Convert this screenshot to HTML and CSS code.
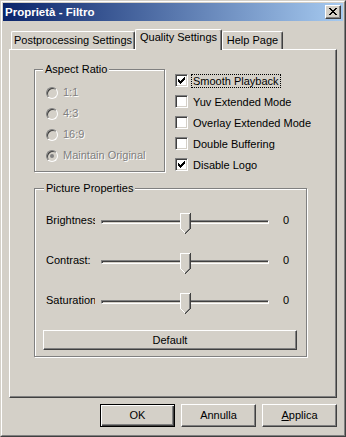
FILE: index.html
```html
<!DOCTYPE html>
<html>
<head>
<meta charset="utf-8">
<title>Proprietà - Filtro</title>
<link rel="stylesheet" href="styles.css">
</head>
<body>
<div class="window">
  <div class="frame">
    <div class="titlebar">
      <span class="title">Proprietà - Filtro</span>
      <span class="close">
        <svg class="close-x" width="8" height="7" viewBox="0 0 8 7" shape-rendering="crispEdges" fill="#000">
          <rect x="0" y="0" width="2" height="1"/><rect x="6" y="0" width="2" height="1"/>
          <rect x="1" y="1" width="2" height="1"/><rect x="5" y="1" width="2" height="1"/>
          <rect x="2" y="2" width="4" height="1"/>
          <rect x="3" y="3" width="2" height="1"/>
          <rect x="2" y="4" width="4" height="1"/>
          <rect x="1" y="5" width="2" height="1"/><rect x="5" y="5" width="2" height="1"/>
          <rect x="0" y="6" width="2" height="1"/><rect x="6" y="6" width="2" height="1"/>
        </svg>
      </span>
    </div>
    <div class="client">
      <div class="tabs">
        <div class="tab tab-post">Postprocessing Settings</div>
        <div class="tab tab-quality active">Quality Settings</div>
        <div class="tab tab-help">Help Page</div>
      </div>
      <div class="panel">
        <div class="top-row">
          <div class="group aspect">
            <div class="legend">Aspect Ratio</div>
            <div class="radios">
              <div class="radio-row"><span class="radio"></span><span class="dis">1:1</span></div>
              <div class="radio-row"><span class="radio"></span><span class="dis">4:3</span></div>
              <div class="radio-row"><span class="radio"></span><span class="dis">16:9</span></div>
              <div class="radio-row"><span class="radio selected"></span><span class="dis">Maintain Original</span></div>
            </div>
          </div>
          <div class="checks">
            <div class="check-row"><span class="box"><svg class="tick" width="7" height="7" viewBox="0 0 7 7" shape-rendering="crispEdges" fill="#000"><rect x="0" y="2" width="1" height="3"/><rect x="1" y="3" width="1" height="3"/><rect x="2" y="4" width="1" height="3"/><rect x="3" y="3" width="1" height="3"/><rect x="4" y="2" width="1" height="3"/><rect x="5" y="1" width="1" height="3"/><rect x="6" y="0" width="1" height="3"/></svg></span><span class="clabel focus">Smooth Playback</span></div>
            <div class="check-row"><span class="box"></span><span class="clabel">Yuv Extended Mode</span></div>
            <div class="check-row"><span class="box"></span><span class="clabel">Overlay Extended Mode</span></div>
            <div class="check-row"><span class="box"></span><span class="clabel">Double Buffering</span></div>
            <div class="check-row"><span class="box"><svg class="tick" width="7" height="7" viewBox="0 0 7 7" shape-rendering="crispEdges" fill="#000"><rect x="0" y="2" width="1" height="3"/><rect x="1" y="3" width="1" height="3"/><rect x="2" y="4" width="1" height="3"/><rect x="3" y="3" width="1" height="3"/><rect x="4" y="2" width="1" height="3"/><rect x="5" y="1" width="1" height="3"/><rect x="6" y="0" width="1" height="3"/></svg></span><span class="clabel">Disable Logo</span></div>
          </div>
        </div>
        <div class="group picture">
          <div class="legend">Picture Properties</div>
          <div class="slider-row">
            <span class="slabel">Brightness</span>
            <div class="slider">
              <div class="track"></div>
              <svg class="thumb" width="11" height="21" viewBox="0 0 11 21" shape-rendering="crispEdges">
                <polygon points="0,0 11,0 11,16 5.5,21.5 0,16" fill="#d4d0c8"/>
                <rect x="0" y="0" width="10" height="1" fill="#fff"/>
                <rect x="0" y="0" width="1" height="16" fill="#fff"/>
                <rect x="10" y="0" width="1" height="16" fill="#404040"/>
                <rect x="9" y="1" width="1" height="15" fill="#808080"/>
                <rect x="1" y="16" width="1" height="1" fill="#fff"/><rect x="2" y="17" width="1" height="1" fill="#fff"/><rect x="3" y="18" width="1" height="1" fill="#fff"/><rect x="4" y="19" width="1" height="1" fill="#fff"/>
                <rect x="9" y="16" width="1" height="1" fill="#404040"/><rect x="8" y="17" width="1" height="1" fill="#404040"/><rect x="7" y="18" width="1" height="1" fill="#404040"/><rect x="6" y="19" width="1" height="1" fill="#404040"/><rect x="5" y="20" width="1" height="1" fill="#404040"/>
                <rect x="8" y="16" width="1" height="1" fill="#808080"/><rect x="7" y="17" width="1" height="1" fill="#808080"/><rect x="6" y="18" width="1" height="1" fill="#808080"/><rect x="5" y="19" width="1" height="1" fill="#808080"/>
              </svg>
            </div>
            <span class="val">0</span>
          </div>
          <div class="slider-row">
            <span class="slabel">Contrast:</span>
            <div class="slider">
              <div class="track"></div>
              <svg class="thumb" width="11" height="21" viewBox="0 0 11 21" shape-rendering="crispEdges">
                <polygon points="0,0 11,0 11,16 5.5,21.5 0,16" fill="#d4d0c8"/>
                <rect x="0" y="0" width="10" height="1" fill="#fff"/>
                <rect x="0" y="0" width="1" height="16" fill="#fff"/>
                <rect x="10" y="0" width="1" height="16" fill="#404040"/>
                <rect x="9" y="1" width="1" height="15" fill="#808080"/>
                <rect x="1" y="16" width="1" height="1" fill="#fff"/><rect x="2" y="17" width="1" height="1" fill="#fff"/><rect x="3" y="18" width="1" height="1" fill="#fff"/><rect x="4" y="19" width="1" height="1" fill="#fff"/>
                <rect x="9" y="16" width="1" height="1" fill="#404040"/><rect x="8" y="17" width="1" height="1" fill="#404040"/><rect x="7" y="18" width="1" height="1" fill="#404040"/><rect x="6" y="19" width="1" height="1" fill="#404040"/><rect x="5" y="20" width="1" height="1" fill="#404040"/>
                <rect x="8" y="16" width="1" height="1" fill="#808080"/><rect x="7" y="17" width="1" height="1" fill="#808080"/><rect x="6" y="18" width="1" height="1" fill="#808080"/><rect x="5" y="19" width="1" height="1" fill="#808080"/>
              </svg>
            </div>
            <span class="val">0</span>
          </div>
          <div class="slider-row">
            <span class="slabel">Saturation</span>
            <div class="slider">
              <div class="track"></div>
              <svg class="thumb" width="11" height="21" viewBox="0 0 11 21" shape-rendering="crispEdges">
                <polygon points="0,0 11,0 11,16 5.5,21.5 0,16" fill="#d4d0c8"/>
                <rect x="0" y="0" width="10" height="1" fill="#fff"/>
                <rect x="0" y="0" width="1" height="16" fill="#fff"/>
                <rect x="10" y="0" width="1" height="16" fill="#404040"/>
                <rect x="9" y="1" width="1" height="15" fill="#808080"/>
                <rect x="1" y="16" width="1" height="1" fill="#fff"/><rect x="2" y="17" width="1" height="1" fill="#fff"/><rect x="3" y="18" width="1" height="1" fill="#fff"/><rect x="4" y="19" width="1" height="1" fill="#fff"/>
                <rect x="9" y="16" width="1" height="1" fill="#404040"/><rect x="8" y="17" width="1" height="1" fill="#404040"/><rect x="7" y="18" width="1" height="1" fill="#404040"/><rect x="6" y="19" width="1" height="1" fill="#404040"/><rect x="5" y="20" width="1" height="1" fill="#404040"/>
                <rect x="8" y="16" width="1" height="1" fill="#808080"/><rect x="7" y="17" width="1" height="1" fill="#808080"/><rect x="6" y="18" width="1" height="1" fill="#808080"/><rect x="5" y="19" width="1" height="1" fill="#808080"/>
              </svg>
            </div>
            <span class="val">0</span>
          </div>
          <div class="btn default-btn">Default</div>
        </div>
      </div>
      <div class="buttons">
        <div class="btn dlg ok">OK</div>
        <div class="btn dlg">Annulla</div>
        <div class="btn dlg"><u>A</u>pplica</div>
      </div>
    </div>
  </div>
</div>
</body>
</html>
```

FILE: styles.css
```css
* { box-sizing: border-box; }
html, body { margin: 0; padding: 0; }
body {
  background: #d4d0c8;
  font-family: "Liberation Sans", Arial, sans-serif;
  font-size: 11px;
  line-height: 13px;
  color: #000;
}
.window {
  width: 346px;
  height: 437px;
  border: 1px solid;
  border-color: #d4d0c8 #404040 #404040 #d4d0c8;
  background: #d4d0c8;
}
.frame {
  height: 100%;
  border: 1px solid;
  border-color: #fff #808080 #808080 #fff;
  padding: 1px;
  display: flex;
  flex-direction: column;
}
.titlebar {
  flex: none;
  height: 18px;
  display: flex;
  align-items: center;
  justify-content: space-between;
  padding: 0 2px;
  background: linear-gradient(to right, #0a246a, #a6caf0);
}
.title {
  color: #fff;
  font-weight: bold;
  font-size: 11.5px;
}
.close {
  width: 16px;
  height: 14px;
  background: #d4d0c8;
  border: 1px solid;
  border-color: #fff #404040 #404040 #fff;
  box-shadow: inset -1px -1px #808080;
  display: flex;
  align-items: flex-start;
}
.close-x { display: block; margin: 2px 0 0 3px; }
.client {
  flex: 1;
  display: flex;
  flex-direction: column;
  padding: 8px 6px 0 6px;
}
.tabs {
  flex: none;
  height: 20px;
  display: flex;
  align-items: flex-end;
  padding-left: 2px;
  position: relative;
  z-index: 1;
}
.tab {
  height: 18px;
  background: #d4d0c8;
  border-top: 1px solid #fff;
  border-left: 1px solid #fff;
  border-right: 1px solid #404040;
  border-radius: 2px 2px 0 0;
  box-shadow: inset -1px 0 #808080;
  text-align: center;
  padding-top: 2px;
  white-space: nowrap;
}
.tab-post { width: 124px; }
.tab-quality { width: 87px; }
.tab-help { width: 61px; }
.tab.active {
  height: 21px;
  margin-bottom: -1px;
  padding-top: 1px;
}
.panel {
  flex: none;
  height: 349px;
  border: 1px solid;
  border-color: #fff #404040 #404040 #fff;
  box-shadow: inset -1px -1px #808080;
  padding: 19px 0 0 24px;
  display: flex;
  flex-direction: column;
  align-items: flex-start;
}
.top-row {
  display: flex;
  align-items: flex-start;
}
.group {
  border: 1px solid #808080;
  box-shadow: inset 1px 1px #fff, 1px 1px #fff;
  display: flex;
  flex-direction: column;
  align-items: flex-start;
}
.legend {
  margin: -7px 0 0 8px;
  padding: 0 2px;
  background: #d4d0c8;
  white-space: nowrap;
}
.aspect { width: 131px; height: 103px; }
.radios { margin-top: 6px; }
.radio-row {
  height: 21px;
  display: flex;
  align-items: center;
  padding-left: 11px;
}
.radio {
  width: 12px;
  height: 12px;
  border-radius: 50%;
  border: 1px solid;
  border-color: #808080 #fff #fff #808080;
  box-shadow: inset 1px 1px #404040, inset -1px -1px #d4d0c8;
  background: #d4d0c8;
  margin-right: 5px;
  display: flex;
  align-items: center;
  justify-content: center;
}
.radio.selected::after {
  content: "";
  width: 4px;
  height: 4px;
  border-radius: 50%;
  background: #808080;
}
.dis {
  color: #808080;
  text-shadow: 1px 1px 0 #fff;
  white-space: nowrap;
}
.checks {
  margin-left: 10px;
  padding-top: 1px;
}
.check-row {
  height: 21px;
  display: flex;
  align-items: center;
}
.box {
  width: 13px;
  height: 13px;
  flex: none;
  border: 1px solid;
  border-color: #808080 #fff #fff #808080;
  box-shadow: inset 1px 1px #404040, inset -1px -1px #d4d0c8;
  background: #fff;
  margin-right: 3px;
}
.tick { display: block; margin: 2px 0 0 2px; }
.clabel {
  border: 1px dotted transparent;
  padding: 0 1px;
  line-height: 12px;
  white-space: nowrap;
}
.clabel.focus { border-color: #000; }
.picture {
  width: 273px;
  margin-top: 13px;
  padding-bottom: 6px;
}
.picture .legend { margin-left: 9px; }
.slider-row {
  display: flex;
  align-items: flex-start;
  height: 21px;
  padding-left: 11px;
  margin-top: 19px;
}
.picture .legend + .slider-row { margin-top: 18px; }
.slabel {
  width: 49px;
  overflow: hidden;
  white-space: nowrap;
  margin-top: 1px;
}
.slider {
  position: relative;
  width: 168px;
  height: 21px;
  margin-left: 6px;
}
.track {
  margin-top: 7px;
  height: 4px;
  border: 1px solid;
  border-color: #808080 #fff #fff #808080;
  box-shadow: inset 1px 1px #404040;
  background: #d4d0c8;
}
.thumb {
  position: absolute;
  left: 79px;
  top: 0;
  display: block;
}
.val { margin: 1px 0 0 14px; }
.btn {
  background: #d4d0c8;
  border: 1px solid;
  border-color: #fff #404040 #404040 #fff;
  box-shadow: inset -1px -1px #808080;
  display: flex;
  align-items: center;
  justify-content: center;
  white-space: nowrap;
}
.default-btn {
  width: 254px;
  height: 20px;
  margin: 16px 0 0 8px;
}
.buttons {
  display: flex;
  justify-content: flex-end;
  gap: 6px;
  margin-top: 6px;
}
.dlg { width: 75px; height: 23px; }
.ok {
  border: 1px solid #000;
  box-shadow: inset 1px 1px #fff, inset -1px -1px #404040, inset -2px -2px #808080;
}
```
